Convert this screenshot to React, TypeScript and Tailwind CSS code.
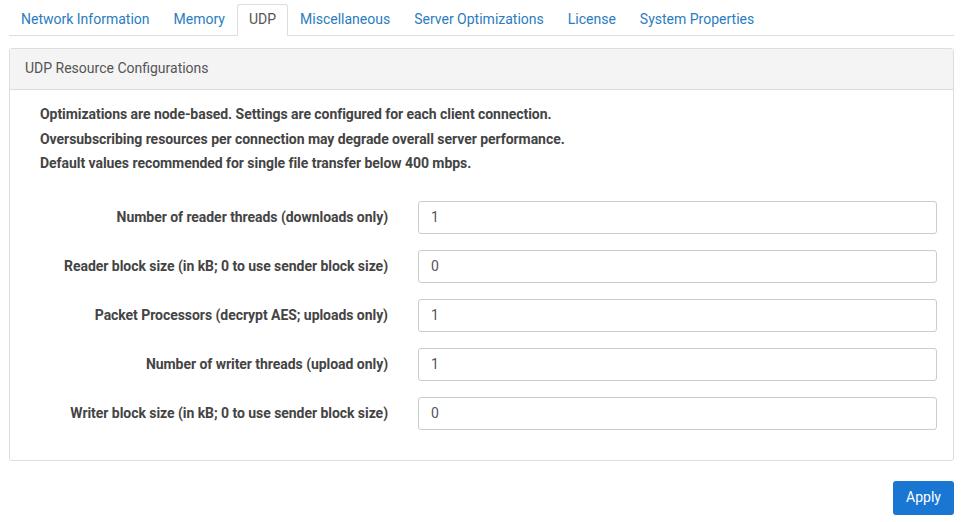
import { useState } from "react";

const tabs = [
  "Network Information",
  "Memory",
  "UDP",
  "Miscellaneous",
  "Server Optimizations",
  "License",
  "System Properties",
];

const fields = [
  { label: "Number of reader threads (downloads only)", value: "1" },
  { label: "Reader block size (in kB; 0 to use sender block size)", value: "0" },
  { label: "Packet Processors (decrypt AES; uploads only)", value: "1" },
  { label: "Number of writer threads (upload only)", value: "1" },
  { label: "Writer block size (in kB; 0 to use sender block size)", value: "0" },
];

export default function App() {
  const [values, setValues] = useState(fields.map((f) => f.value));

  return (
    <div className="min-h-[522px] bg-white pl-[9px] pr-[11px] pt-[4px] font-['Roboto',sans-serif] text-[14px] text-[#444]">
      <div className="flex border-b border-[#ddd]">
        {tabs.map((tab) => (
          <div
            key={tab}
            className={
              tab === "UDP"
                ? "-mb-px flex h-[32px] items-center rounded-t-[3px] border border-[#ddd] border-b-white bg-white px-[11px] pb-[2px] text-[#555]"
                : "-mb-px flex h-[32px] items-center border border-transparent px-[11px] pb-[2px] text-[#2a7cc0]"
            }
          >
            {tab}
          </div>
        ))}
      </div>

      <div className="mt-[12px] rounded-[3px] border border-[#ddd]">
        <div className="flex h-[41px] items-center border-b border-[#ddd] bg-[#f4f4f4] px-[15px] pb-[2px] text-[#555]">
          UDP Resource Configurations
        </div>
        <div className="pb-[30px] pt-[12px]">
          <div className="pl-[30px] font-bold leading-[24.5px] tracking-[-0.05px] text-[#444]">
            <p>Optimizations are node-based. Settings are configured for each client connection.</p>
            <p>Oversubscribing resources per connection may degrade overall server performance.</p>
            <p>Default values recommended for single file transfer below 400 mbps.</p>
          </div>
          <div className="mt-[25px] flex flex-col gap-[16px] pr-[16px]">
            {fields.map((f, i) => (
              <div key={f.label} className="flex items-center">
                <label className="w-[378px] text-right font-bold tracking-[-0.05px] text-[#444]">
                  {f.label}
                </label>
                <input
                  className="ml-[30px] h-[33px] flex-1 rounded-[3px] border border-[#ccc] px-[12px] text-[14px] text-[#555] outline-none"
                  value={values[i]}
                  onChange={(e) =>
                    setValues(values.map((v, j) => (j === i ? e.target.value : v)))
                  }
                />
              </div>
            ))}
          </div>
        </div>
      </div>

      <div className="mt-[20px] flex justify-end">
        <button className="h-[34px] rounded-[3px] bg-[#1976d2] px-[13px] text-[14px] text-white">
          Apply
        </button>
      </div>
    </div>
  );
}
